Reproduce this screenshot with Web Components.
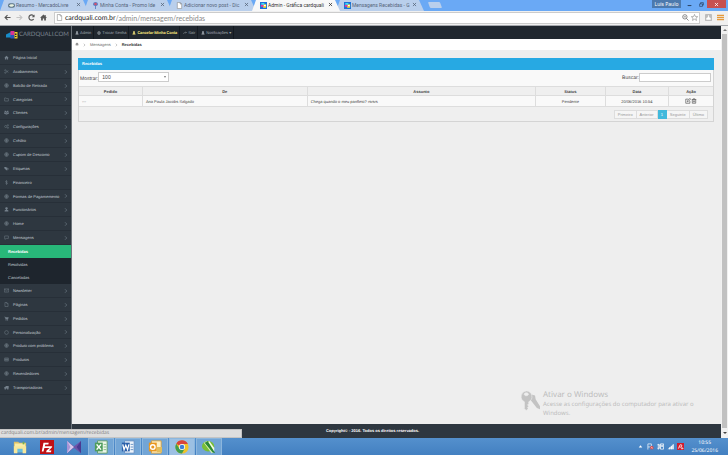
<!DOCTYPE html>
<html lang="pt-BR">
<head>
<meta charset="utf-8">
<title>Admin - Gráfica cardquali</title>
<style>
html, body { margin: 0; height: 100%; }
body { font-family: "Liberation Sans", Arial, sans-serif; text-rendering: geometricPrecision; overflow: hidden; }
</style>
</head>
<body>
<desktop-shell></desktop-shell>
<script>
const RESET = `*{box-sizing:border-box}button,input,select{font:inherit;color:inherit;border:0;margin:0;padding:0;background:none;border-radius:0;outline:0}a{color:inherit;text-decoration:none}ul{list-style:none;margin:0;padding:0}`;
const define = (name, css, html) => {
  customElements.define(name, class extends HTMLElement {
    connectedCallback() {
      if (this.shadowRoot) return;
      const t = document.createElement('template');
      t.innerHTML = `<style>${RESET}${css}</style>${typeof html === 'function' ? html(this) : html}`;
      this.attachShadow({ mode: 'open' }).append(t.content.cloneNode(true));
    }
  });
};

const S = 'fill="none" stroke="currentColor" stroke-width="1.6"';
const ICONS = {
  home: '<path fill="currentColor" d="M8 2 1 8.5h2V14h4v-4h2v4h4V8.500h2z"/>',
  cut: `<g ${S}><circle cx="4" cy="4" r="2"/><circle cx="4" cy="12" r="2"/><path d="M6 5l8 6M6 11l8-6"/></g>`,
  globe: `<g ${S}><circle cx="8" cy="8" r="6"/><path d="M2 8h12M8 2v12M4 4q4 3 8 0M4 12q4-3 8 0"/></g>`,
  folder: `<path ${S} d="M2 13V3h5l1 2h6v8z"/>`,
  users: '<path fill="currentColor" d="M2 2h4v4H2zM10 2h4v4h-4zM6 5h4v4H6zM1 7h4v6H1zM11 7h4v6h-4zM5 10h6v4H5z"/>',
  cogs: `<g ${S}><circle cx="5.500" cy="8" r="3.500"/><circle cx="12.500" cy="4" r="2"/><circle cx="12.500" cy="12" r="2"/></g>`,
  tags: '<path fill="currentColor" d="M1 3h5l6 6-4 5-7-7zM8 3l7 6-3 5-1-1 2-4-6-6z"/>',
  dollar: `<path ${S} d="M11 5Q10 3 8 3 5 3 5 5.500T8 8t3 2.500T8 13q-2 0-3-2M8 1v14"/>`,
  user: '<path fill="currentColor" d="M8 1a3 3 0 0 1 2 6l-1 1 5 3v3H2v-3l5-3-1-1a3 3 0 0 1 2-6z"/>',
  comment: `<path ${S} d="M2 3h12v8H7l-4 3v-3H2z"/>`,
  mail: `<path ${S} d="M1 3h14v10H1zl7 6 7-6"/>`,
  file: `<path ${S} d="M3 1.500h6l4 4v9H3zM9 1.500v4h4"/>`,
  cart: '<path fill="currentColor" d="M1 2h3l1 2h10l-2 6H5L3 4H1zM5 11h3v3H5zM10 11h3v3h-3z"/>',
  ring: `<circle ${S} cx="8" cy="8" r="6"/>`,
  book: `<path ${S} d="M2 3h12v10H2zM6 3v10M10 3v10M2 8h12"/>`,
  truck: '<path fill="currentColor" d="M5 3h10v8H5zM1 6h4v5H1zM2 11h4v3H2zM10 11h4v3h-4z"/>',
  share: `<path ${S} d="M2 12q0-6 6-6h5M10 3l4 3-4 3"/>`,
  chevron: '<path fill="none" stroke="currentColor" stroke-width="2.500" d="M4 1l7 7-7 7"/>',
  edit: `<path ${S} d="M9 3H2v11h11V8M6 10l1-3 6-6 2 2-6 6z"/>`,
  trash: `<path ${S} d="M2 4h12M6 4V2h4v2M3.500 4v10h9V4M6.500 6.500v5M9.500 6.500v5"/>`,
  back: '<path fill="none" stroke="currentColor" stroke-width="2.600" d="M15 8H3M8 2.500 2.500 8 8 13.500"/>',
  forward: '<path fill="none" stroke="currentColor" stroke-width="2.600" d="M1 8h12M8 2.500 13.500 8 8 13.500"/>',
  reload: '<path fill="none" stroke="currentColor" stroke-width="2.600" d="M13 11.500A6 6 0 1 1 13 4.500"/><path fill="currentColor" d="M15 1v6.500H8.500z"/>',
  house: '<path fill="currentColor" d="M8 1 0 8.500h2.500V15h4v-4.500h3V15h4V8.500H16l-3-3V2h-2v2z"/>',
  page: '<path fill="#fff" stroke="#8b8b8b" stroke-width="1.400" d="M3 1h6.500L13 4.500V15H3zM9.500 1v3.500H13"/>',
  magnify: '<g fill="none" stroke="#666" stroke-width="1.700"><circle cx="6.500" cy="6.500" r="5"/><path d="M4 6.500h5M10 10l5 5" /></g>',
  star: '<path fill="none" stroke="#777" stroke-width="1.200" d="m8 1 2.100 4.800 5.200.4-4 3.400 1.300 5.100L8 12l-4.600 2.700 1.300-5.100-4-3.400 5.200-.4z"/>',
  ext: '<rect width="16" height="16" rx="1" fill="#bdbdbd"/><path fill="#fff" d="M3 13V9l3-1V6h1V3h2v3h1v2l3 1v4z"/>',
  menu: '<path stroke="#e59a3c" stroke-width="3" d="M0 3h16M0 8h16M0 13h16"/>',
  close: '<path fill="none" stroke="currentColor" stroke-width="2.500" d="m3 3 10 10M13 3 3 13"/>',
  min: '<path fill="currentColor" d="M2 10h12v3H2z"/>',
  max: '<path fill="none" stroke="currentColor" stroke-width="2" d="M2 6h9v8H2zM5 6V2h9v8h-3"/>',
  handshake: '<rect y="3" width="16" height="10" rx="5" fill="#5c7484"/><path fill="#e9f2e2" d="M2 8l4-3h6l2 3-4 3H6z"/>',
  pin: '<path fill="#5b7fc4" d="M2 5q1-5 6-5t6 5q-1 4-5 4v7H7V9Q3 9 2 5z"/><circle cx="8" cy="4.500" r="3" fill="#d0526f"/>',
  print: '<rect width="16" height="16" fill="#1a72d9"/><path fill="#f7db38" d="M7 5h7v8H7z"/><path fill="#eb36a0" d="M2 6h6v5H2z"/><path fill="#42daf4" d="M3 2h7v4H3z"/><path fill="#fff" d="M9 7h4v2H9z"/>',
  folderwin: '<path fill="#dbc069" d="M1 2h5l1 1h8v11H1z"/><path fill="#f8eda8" d="M2 4h12v9H2z"/><path fill="#67bee0" d="M3 9h10v5H3z"/><path fill="#f7e79b" d="M1 7h4v8H1zM11 7h4v8h-4zM5 7h6v3H5z"/><path fill="#75ae51" d="M11 2h2v3h-2z"/>',
  fz: '<rect x="0" y="0" width="16" height="16" fill="#bf1015"/><path fill="#fff" d="m4 3h6L9.500 5H6l-.5 2H8l-.5 2H5l-1 4H2zM8 7h6l-.5 1.500L10 12h3l-.5 2H7l.5-2L11 9H7.500z"/>',
  vs: '<path fill="#6d55a8" d="m0 1 8 6 8-6v14L8 9l-8 6z"/><path fill="#d6c9ec" d="m0 1 8 7-8 7z"/><path fill="#a995d6" d="m0 1 4 7-4 7z"/><path fill="#4b3a91" d="m16 1-5 7 5 7z"/>',
  excel: '<path fill="#edf6e9" stroke="#5c9b60" d="M4 1h11v14H4z"/><path fill="#4f9d5c" d="M1 3h9v10H1z"/><path stroke="#fff" stroke-width="1.700" d="m3 5 5 6M8 5l-5 6"/><path stroke="#79b779" d="M11 5h3M11 8h3M11 11h3"/>',
  word: '<path fill="#eef4fb" stroke="#668fc1" d="M4 1h11v14H4z"/><path fill="#2a5fa9" d="M1 3h9v10H1z"/><path fill="none" stroke="#fff" stroke-width="1.500" d="m2 5 1.500 6 2-5 2 5L9 5"/><path stroke="#5d8ac0" d="M11 5h3M11 8h3M11 11h3"/>',
  outlook: '<path fill="#fdf0c7" stroke="#dda13a" d="M4 1h11v14H4z"/><path fill="#e8971f" d="M1 3h9v10H1z"/><circle cx="5.500" cy="8" r="2.600" fill="none" stroke="#fff" stroke-width="1.600"/><path fill="#e2bd5c" d="M10 8h6v6h-6z"/>',
  chrome: '<circle cx="8" cy="8" r="7.500" fill="#efc32a"/><path fill="#d8443b" d="M8 8 1.500 4.200A7.500 7.500 0 0 1 14.700 4.500H8z"/><path fill="#3f9d50" d="M1.500 4.200A7.500 7.500 0 0 0 8 15.500l3-5.500-6 0z"/><circle cx="8" cy="8" r="3.500" fill="#fff"/><circle cx="8" cy="8" r="2.700" fill="#3f7fd5"/>',
  corel: '<ellipse cx="7" cy="7" rx="7" ry="6" fill="#79bf35"/><path fill="#d9f0b0" d="m2 3 9 12 2-1L5 1.500z"/><path fill="#2c8a35" d="M7 1.500 14 13l1 2-3-1L3 3z"/><path fill="#f3fbe0" d="m7 2 1.500-.5L14 9v4z"/>',
  up: '<path fill="#fff" d="m8 5 4 5H4z"/>',
  flag: '<path fill="none" stroke="#fff" stroke-width="1.500" d="M2 15V2h8v7H2"/><circle cx="11" cy="11" r="4" fill="#d83f3f"/><path stroke="#fff" d="m9 9 4 4M13 9l-4 4"/>',
  plug: '<path fill="none" stroke="#fff" stroke-width="1.700" d="M1 4h5v8H1M8 2h7v12H8zM3 2v13"/><path fill="#fff" d="M10 4h3v5h-3z"/>',
  signal: '<path fill="#c6daee" d="M1 14 15 2v12z"/><path fill="#fff" d="M5 14v-3l2-2v5zM9 14V8l2-2v8zM13 14V4l2-2v12z"/>',
  avira: '<rect width="16" height="16" fill="#d31c2d"/><path fill="none" stroke="#fff" stroke-width="1.700" d="M3 13 7 4q5-1 4 3t-6 2M10 9l4 4H9"/>',
  keys: '<g fill="#c3c3c3"><path d="m8.500 3 3.500 1 .5 3L16 12.500V15l-2.500-1L8 7z"/><path stroke="#eee" stroke-width=".5" fill-rule="evenodd" d="M5 .3a4.600 4.600 0 0 1 2 8.700v1.500l-1 1 1 1-1 1 .5 1L5 16l-1.500-1.500V9A4.600 4.600 0 0 1 5 .3zm0 1.500a1.700 1.200 0 1 0 .1 0z"/></g>',
};
define('ui-icon', ':host{display:inline-block;width:5px;height:5px;flex:none}svg{display:block;width:100%;height:100%}',
  el => `<svg viewBox="0 0 16 16" aria-hidden="true">${ICONS[el.getAttribute('name')] || ''}</svg>`);

define('browser-tab', `
  :host{display:block;flex:0 1 88px;min-width:0;height:11px;margin-right:-4px}
  div{height:100%;display:flex;align-items:center;gap:1px;padding:0 7px 0 8px;background:#b9cfec;color:#56657a;clip-path:polygon(0 100%,4px 0,calc(100% - 5px) 0,100% 100%)}
  :host([active]) div{background:#f8f8f8;color:#333}
  :host([active]){position:relative;z-index:1}
  button{display:block;font-size:5px;line-height:9px;font-family:Roboto,sans-serif}
  .t{flex:1;min-width:0;overflow:hidden;white-space:nowrap;text-align:left}
  ui-icon{width:7px;height:7px}.x ui-icon{width:5px;height:5px}`,
  el => `<div><ui-icon name="${el.getAttribute('icon')}"></ui-icon><button class="t"><slot></slot></button><button class="x" aria-label="Fechar guia"><ui-icon name="close"></ui-icon></button></div>`);

define('browser-chrome', `
  :host{display:block}
  .strip{display:flex;align-items:flex-end;height:11px;background:#6aa9f5}
  .tabs{display:flex;flex:0 1 424px;min-width:0}
  .new{width:12px;height:6px;background:#b9cfec;margin:0 auto 3px 5px;transform:skewX(20deg);border-radius:1px}
  .win{display:flex;align-self:flex-start;height:8px;font-size:5px;line-height:8px;color:#243a58;padding-right:2px}
  .win button{width:12px;display:grid;place-items:center}
  .win .user{width:29px;margin-right:2px;background:#4c79ad;color:#fff;font-family:"Noto Sans",sans-serif}
  .win .close{width:19px;background:#c75050;color:#fff}
  .bar{display:flex;align-items:center;height:15px;padding:0 4px 1px;gap:5px;background:#f0f0f0;border-bottom:1px solid #a5a8ad;color:#555}
  .bar button{display:block}.bar ui-icon{display:block;width:7px;height:7px}
  .dim{color:#c4c4c4}
  .omni{flex:1;display:flex;align-items:center;gap:2px;height:12px;margin-left:2px;padding:0 1px;background:#fff;border:1px solid #ccc;font:7px Lato,sans-serif;min-width:0}
  .omni label{color:#222;display:block}
  .omni input{flex:1;min-width:0;color:#888;margin-left:-2px;height:10px}`,
  `<div class="strip"><div class="tabs">
    <browser-tab icon="handshake">Resumo - MercadoLivre</browser-tab>
    <browser-tab icon="pin">Minha Conta - Promo Ide</browser-tab>
    <browser-tab icon="page">Adicionar novo post - Dic</browser-tab>
    <browser-tab icon="print" active>Admin - Gráfica cardquali</browser-tab>
    <browser-tab icon="print">Mensagens Recebidas - G</browser-tab></div>
    <button class="new" aria-label="Nova guia"></button>
    <div class="win"><button class="user">Luis Paulo</button><button aria-label="Minimizar"><ui-icon name="min"></ui-icon></button><button aria-label="Restaurar"><ui-icon name="max"></ui-icon></button><button class="close" aria-label="Fechar"><ui-icon name="close"></ui-icon></button></div>
  </div>
  <div class="bar">
    <button aria-label="Voltar"><ui-icon name="back"></ui-icon></button>
    <button class="dim" aria-label="Avançar"><ui-icon name="forward"></ui-icon></button>
    <button aria-label="Recarregar"><ui-icon name="reload"></ui-icon></button>
    <button aria-label="Início"><ui-icon name="house"></ui-icon></button>
    <div class="omni"><ui-icon name="page"></ui-icon><label for="url">cardquali.com.br</label><input id="url" value="/admin/mensagem/recebidas"><ui-icon name="magnify"></ui-icon><ui-icon name="star"></ui-icon></div>
    <button aria-label="Extensão"><ui-icon name="ext"></ui-icon></button>
    <button aria-label="Menu"><ui-icon name="menu"></ui-icon></button>
  </div>`);

define('nav-item', `
  :host{display:block;min-height:0}
  a{display:flex;align-items:center;height:100%;gap:4px;padding:0 3px 0 4px;font-size:4px;line-height:5px;color:#c3cbd3;white-space:nowrap;border-bottom:1px solid #272f38}
  span{flex:1}ui-icon{color:#74808b;width:5px;height:5px}
  ui-icon.c{width:4px;height:4px;color:#74808b}
  :host([sub]) a{padding-left:8px;background:#1e252d;border:0}
  :host([current]) a{background:#28b779;color:#fff;font-weight:bold}`,
  el => `<a href="#">${el.hasAttribute('sub') ? '' : `<ui-icon name="${el.getAttribute('icon')}"></ui-icon>`}<span><slot></slot></span>${el.hasAttribute('arrow') ? '<ui-icon class="c" name="chevron"></ui-icon>' : ''}</a>`);

const item = ([icon, text, arrow = 1]) => `<nav-item icon="${icon}" ${arrow ? 'arrow' : ''}>${text}</nav-item>`;
define('side-nav', `
  :host{display:block;width:72px;background:#2e3740;border-right:1px solid #6c737a}
  .logo{display:flex;align-items:center;height:25px;padding:0 5px 7px 6px;background:#20272f}
  .logo svg{width:13px;height:10px;flex:none}
  .logo a{font:6px/8px Lato,sans-serif;color:#7b858f;display:block}
  nav div{display:grid;grid-auto-rows:14px 14px 14px 13px 14px 14px 14px}
  nav .sub{grid-auto-rows:13px}`,
  `<div class="logo"><svg viewBox="0 0 26 20"><path fill="#188cc9" d="M0 9 10 4v11H0z"/><path fill="#d93295" d="M9 2h8v9H9z"/><path fill="#2754b8" d="M9 10h8v7H9z"/><path fill="#f0cf2b" d="M17 4h6v13h-6z"/><path fill="#20272f" d="M18 7h3v3h-3zM18 12h3v2h-3z"/></svg><a href="#">CARDQUALI.COM</a></div>
  <nav><div>${[['home', 'Página Inicial', 0], ['cut', 'Acabamentos'], ['globe', 'Balcão de Retirada'], ['folder', 'Categorias'], ['users', 'Clientes'], ['cogs', 'Configurações'], ['globe', 'Crédito'], ['globe', 'Cupom de Desconto'], ['tags', 'Etiquetas'], ['dollar', 'Financeiro', 0], ['globe', 'Formas de Pagamemento'], ['user', 'Funcionários'], ['globe', 'Home'], ['comment', 'Mensagens']].map(item).join('')}</div>
  <div class="sub"><nav-item sub current>Recebidas</nav-item><nav-item sub>Resolvidas</nav-item><nav-item sub>Canceladas</nav-item></div>
  <div>${[['mail', 'Newsletter'], ['file', 'Páginas'], ['cart', 'Pedidos'], ['ring', 'Personalização'], ['globe', 'Produto com problema'], ['book', 'Produtos'], ['globe', 'Revendedores'], ['truck', 'Transportadoras']].map(item).join('')}</div></nav>`);

define('top-links', `
  :host{display:flex;height:13px;background:#20272f;font-size:4px;line-height:5px;color:#a3abb3}
  a{display:flex;align-items:center;gap:1px;padding:0 2px 0 3px;border-right:1px solid #141a20;white-space:nowrap}
  ui-icon{width:4px;height:4px}.y{color:#f3e37b;font-weight:bold;font-family:Roboto,sans-serif}`,
  `<a href="#"><ui-icon name="user"></ui-icon>Admin</a><a href="#"><ui-icon name="globe"></ui-icon>Trocar Senha</a><a class="y" href="#"><ui-icon name="user"></ui-icon>Cancelar Minha Conta</a><a href="#"><ui-icon name="share"></ui-icon>Sair</a><a href="#"><ui-icon name="user"></ui-icon>Notificações ▾</a>`);

define('bread-crumb', `
  :host{display:flex;align-items:center;gap:4px;height:11px;padding:0 3px;background:#fff;font-size:4px;line-height:5px;color:#666}
  ui-icon{width:4px;height:4px;color:#888}ui-icon.s{width:3px;height:4px}b{color:#333}a{display:block}`,
  `<a href="#" aria-label="Início"><ui-icon name="home"></ui-icon></a><ui-icon class="s" name="chevron"></ui-icon><a href="#">Mensagens</a><ui-icon class="s" name="chevron"></ui-icon><b>Recebidas</b>`);

define('message-panel', `
  :host{display:block;border:1px solid #d4d4d4;border-top:0;background:#efefef;font-size:4px;line-height:5px;color:#444}
  h1{margin:0 -1px;padding:0 4px;height:12px;font-size:4px;line-height:12px;color:#fff;background:#27a9e3}
  .tools{display:flex;justify-content:space-between;height:16px;padding:2px 2px 0 1px;background:#f9f9f9;font-size:5px;line-height:6px}
  .tools div{display:flex;align-items:center;height:10px}
  .tools .show{align-items:flex-end}
  .tools .find{height:9px;margin-top:1px}
  .pick{position:relative}
  select{appearance:none;display:block;width:71px;height:10px;padding:0 3px;background:#fff;border:1px solid #ccc}
  .pick::after{content:"";position:absolute;right:3px;top:4px;width:0;border:solid transparent;border-width:2px 1px 0;border-top-color:#777}
  input{width:72px;height:9px;background:#fff;border:1px solid #ccc}
  table{width:100%;border-collapse:collapse;table-layout:fixed}
  th,td{border:1px solid #ddd;padding:0 3px;text-align:left;white-space:nowrap;overflow:hidden}
  th:first-child,td:first-child{border-left:0}th:last-child,td:last-child{border-right:0}
  th{height:9px;text-align:center;background:#efefef}
  td{height:11px;background:#f9f9f9}td.m{text-align:center}
  td button{display:inline-block;vertical-align:middle}td ui-icon{display:block;width:6px;height:6px}
  .pages{display:flex;justify-content:flex-end;padding:3px 5px 2px}
  .pages button{height:9px;padding:0 3px;border:1px solid #ddd;border-left:0;background:#f5f5f5;color:#999}
  .pages button:first-child{border-left:1px solid #ddd}
  .pages .on{background:#41b9dc;border-color:#41b9dc;color:#fff}`,
  `<h1>Recebidas</h1>
  <div class="tools"><div class="show"><label for="n">Mostrar:</label><span class="pick"><select id="n"><option>100</option></select></span></div><div class="find"><label for="q">Buscar:</label><input id="q" type="text"></div></div>
  <table><colgroup><col style="width:10%"><col style="width:26%"><col style="width:36%"><col style="width:11%"><col style="width:10%"><col style="width:7%"></colgroup>
  <thead><tr><th>Pedido</th><th>De</th><th>Assunto</th><th>Status</th><th>Data</th><th>Ação</th></tr></thead>
  <tbody><tr><td>---</td><td>Ana Paula Jacobs Salgado</td><td>Chega quando o meu panfleto? rsrsrs</td><td class="m">Pendente</td><td class="m">20/06/2016 10:54</td><td class="m"><button aria-label="Editar"><ui-icon name="edit"></ui-icon></button><button aria-label="Excluir"><ui-icon name="trash"></ui-icon></button></td></tr></tbody></table>
  <div class="pages"><button>Primeiro</button><button>Anterior</button><button class="on">1</button><button>Seguinte</button><button>Último</button></div>`);

define('activate-notice', `
  :host{display:flex;gap:3px;width:184px;color:#bdbdbd;font:6px/9px "Noto Sans",sans-serif}
  ui-icon{width:20px;height:21px}strong{display:block;font-weight:normal;font-size:8px;line-height:10px}p{margin:0}`,
  `<ui-icon name="keys"></ui-icon><p><strong>Ativar o Windows</strong>Acesse as configurações do computador para ativar o Windows.</p>`);

define('page-scroll', `
  :host{display:flex;flex-direction:column;width:7px;background:#f1f1f1;color:#666}
  i{display:grid;place-items:center;height:8px}i::after{content:"";border:solid transparent;border-width:0 2px 2px;border-bottom-color:#777}
  i.d{height:10px}i.d::after{border-width:2px 2px 0;border-top-color:#444}
  b{flex:1;background:#c1c1c1;margin:0 1px}`,
  `<i></i><b></b><i class="d"></i>`);

define('task-bar', `
  :host{display:flex;align-items:center;height:17px;padding:0 10px 0 7px;background:linear-gradient(#5490cd,#4380c1);color:#fff;font:5px/8px "Noto Sans",sans-serif}
  .apps{display:flex;gap:1px;flex:1}
  .apps button{width:26px;height:17px;display:grid;place-items:center}
  .apps .run{background:#72a5d6;border:1px solid #8cb6dd;border-bottom:0}
  .apps .on{background:#9cc0e3}
  .apps ui-icon{width:14px;height:14px}
  .tray{display:flex;gap:3px;align-items:center;margin-right:7px}.tray ui-icon{width:7px;height:7px}
  time{display:block;text-align:center}`,
  `<div class="apps">${['folderwin', 'fz', 'vs', 'excel', 'word', 'outlook', 'chrome', 'corel'].map((n, i) => `<button aria-label="${n}" class="${i > 2 ? 'run' : ''} ${n === 'chrome' ? 'on' : ''}"><ui-icon name="${n}"></ui-icon></button>`).join('')}</div>
  <div class="tray">${['up', 'flag', 'plug', 'signal', 'avira'].map(n => `<ui-icon name="${n}"></ui-icon>`).join('')}</div><time>10:55<br>25/06/2016</time>`);

define('desktop-shell', `
  :host{display:flex;flex-direction:column;height:100%}
  .view{flex:1;display:flex;min-height:0;position:relative}
  .col{flex:1;min-width:0;display:flex;flex-direction:column}
  main{flex:1;background:#eee;padding:8px 7px 0 6px}
  footer{height:14px;background:#2e3740;color:#fff;font-size:4px;line-height:13px;font-weight:bold;text-align:center;padding-right:48px}
  .status{position:absolute;left:0;bottom:0;width:242px;height:9px;padding:0 1px;background:#dedede;border:1px solid #c4c4c4;border-left:0;color:#808080;font:5px/7px "Open Sans",sans-serif}
  activate-notice{position:absolute;right:24px;bottom:20px}`,
  `<browser-chrome></browser-chrome>
  <div class="view"><side-nav></side-nav><div class="col"><top-links></top-links><bread-crumb></bread-crumb><main><message-panel></message-panel></main><footer>Copyright© - 2016. Todos os direitos reservados.</footer></div><page-scroll></page-scroll>
  <activate-notice></activate-notice><div class="status">cardquali.com.br/admin/mensagem/recebidas</div></div>
  <task-bar></task-bar>`);
</script>
</body>
</html>
